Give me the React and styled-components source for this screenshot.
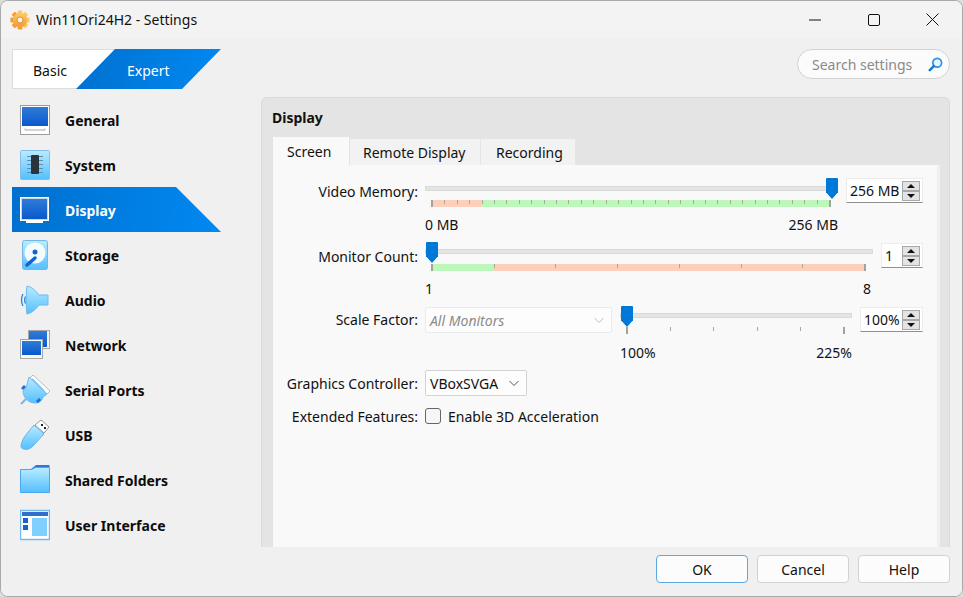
import React from 'react'
import styled, { createGlobalStyle } from 'styled-components'

const GlobalStyle = createGlobalStyle`
  html, body { margin: 0; padding: 0; background: #dcdcdc; }
  * { box-sizing: border-box; }
  body { font-family: "Noto Sans", "Open Sans", sans-serif; font-size: 14px; color: #111; }
`

const Window = styled.div`
  width: 963px;
  height: 597px;
  display: flex;
  flex-direction: column;
  overflow: hidden;
  background: #f0f0f0;
  border: 1px solid #a9a9a9;
  border-radius: 8px;
`

const TitleBar = styled.div`
  height: 37px;
  flex: none;
  display: flex;
  align-items: center;
  padding-left: 9px;
  background: #f3f3f3;
`

const TitleText = styled.span`
  margin-left: 6px;
  font-size: 14px;
  flex: 1;
`

const WinButton = styled.div`
  width: 59px;
  height: 37px;
  display: flex;
  align-items: center;
  justify-content: center;
`

const Main = styled.div`
  flex: 1;
  min-height: 0;
  display: flex;
  gap: 40px;
  padding: 11px 12px 0 11px;
`

const Sidebar = styled.div`
  width: 209px;
  flex: none;
`

const ModeSwitch = styled.div`
  display: flex;
  height: 40px;
  margin-bottom: 8px;
`

const ModeBasic = styled.div`
  width: 103px;
  background: #fff;
  border-left: 1px solid #dcdcdc;
  border-top: 1px solid #dcdcdc;
  border-bottom: 1px solid #dcdcdc;
  padding-left: 20px;
  line-height: 42px;
`

const ModeExpert = styled.div`
  width: 145px;
  margin-left: -39px;
  margin-right: -39px;
  padding-left: 51px;
  line-height: 44px;
  color: #fff;
  background: linear-gradient(100deg, #0070cf, #0089f2);
  clip-path: polygon(39px 0, 100% 0, 106px 100%, 0 100%);
`

const NavRow = styled.div`
  height: 45px;
  display: flex;
  align-items: center;
  padding: 1px 0 0 8px;
  gap: 15px;
  font-weight: 700;
  font-size: 14px;
  color: ${p => (p.$active ? '#fff' : '#0c0c0c')};
  background: ${p => (p.$active ? 'linear-gradient(100deg, #0070cf, #0089f2)' : 'none')};
  clip-path: ${p => (p.$active ? 'polygon(0 0, 164px 0, 100% 100%, 0 100%)' : 'none')};
`

const NavIcon = styled.svg`
  width: 30px;
  height: 32px;
  flex: none;
`

const Content = styled.div`
  flex: 1;
  min-width: 0;
  display: flex;
  flex-direction: column;
`

const SearchRow = styled.div`
  display: flex;
  justify-content: flex-end;
  margin-bottom: 18px;
`

const SearchBox = styled.div`
  width: 153px;
  height: 30px;
  display: flex;
  align-items: center;
  justify-content: space-between;
  padding: 0 6px 0 14px;
  background: #fbfbfb;
  border: 1px solid #d2d2d2;
  border-radius: 15px;
  color: #8a8a8a;
`

const Panel = styled.div`
  flex: 1;
  min-height: 0;
  display: flex;
  flex-direction: column;
  background: #e4e4e4;
  border: 1px solid #dadada;
  border-bottom: none;
  border-radius: 6px 6px 0 0;
  padding: 10px 9px 0 11px;
`

const PanelTitle = styled.div`
  font-weight: 700;
  font-size: 14px;
  line-height: 20px;
  margin: 0 0 9px -1px;
`

const TabBar = styled.div`
  display: flex;
  align-items: flex-end;
  gap: 1px;
  height: 28px;
  flex: none;
`

const Tab = styled.div`
  height: ${p => (p.$active ? '28px' : '26px')};
  width: ${p => p.$width}px;
  padding-left: ${p => p.$pad}px;
  line-height: ${p => (p.$active ? '29px' : '27px')};
  background: ${p => (p.$active ? '#f9f9f9' : '#f2f2f2')};
`

const TabPane = styled.div`
  flex: 1;
  min-height: 0;
  padding-top: 13px;
  background: #f9f9f9;
  border-right: 3px solid #f0f0f0;
`

const FormRow = styled.div`
  display: flex;
  height: ${p => p.$height}px;
`

const RowLabel = styled.div`
  width: 145px;
  flex: none;
  text-align: right;
  line-height: 20px;
  padding-top: ${p => p.$top}px;
`

const RowBody = styled.div`
  flex: 1;
  min-width: 0;
  display: flex;
  align-items: flex-start;
  gap: 8px;
  padding: 0 14px 0 7px;
`

const SliderCol = styled.div`
  position: relative;
  flex: 1;
  min-width: 0;
  padding-top: ${p => p.$top}px;
`

const Track = styled.div`
  height: 5px;
  background: #e3e5e4;
  border: 1px solid #d8dbd9;
`

const Thumb = styled.div`
  position: absolute;
  top: 0;
  width: 12px;
  height: 21px;
  background: #0078d7;
  border-radius: 1px 1px 0 0;
  clip-path: polygon(0 0, 100% 0, 100% 68%, 50% 100%, 0 68%);
`

const Strip = styled.div`
  height: 7px;
  margin: ${p => p.$gap}px 7px 0 6px;
  display: flex;
  justify-content: space-between;
  align-items: flex-start;
`

const Tick = styled.div`
  width: ${p => (p.$end ? 2 : 1)}px;
  height: ${p => (p.$end ? 7 : p.$tall)}px;
  background: ${p => (p.$end ? '#a5a297' : '#aaa79c')};
`

const ScaleLabels = styled.div`
  display: flex;
  justify-content: space-between;
  line-height: 20px;
  margin-top: ${p => p.$gap}px;
`

const Spin = styled.div`
  width: ${p => p.$width}px;
  height: 25px;
  flex: none;
  display: flex;
  align-items: center;
  justify-content: space-between;
  margin-top: ${p => p.$top}px;
  padding: 0 2px 0 3px;
  background: #fff;
  border: 1px solid #ececec;
  border-bottom: 1px solid #8f8f8f;
`

const SpinButtons = styled.div`
  width: 18px;
  display: flex;
  flex-direction: column;
  gap: 0;
`

const SpinButton = styled.div`
  height: 10px;
  display: flex;
  align-items: center;
  justify-content: center;
  background: #e3e3e3;
  border: 1px solid #a8a8a8;
  &::after {
    content: '';
    border-left: 4px solid transparent;
    border-right: 4px solid transparent;
    ${p => (p.$down ? 'border-top: 4px solid #111;' : 'border-bottom: 4px solid #111;')}
  }
`

const Select = styled.div`
  width: ${p => p.$width}px;
  height: 26px;
  flex: none;
  display: flex;
  align-items: center;
  justify-content: space-between;
  padding: 0 6px 0 4px;
  background: #fdfdfd;
  border: 1px solid ${p => (p.$disabled ? '#ebebeb' : '#d4d4d4')};
  border-radius: 2px;
  color: ${p => (p.$disabled ? '#8b8b8b' : '#111')};
  font-style: ${p => (p.$disabled ? 'italic' : 'normal')};
`

const Check = styled.div`
  width: 16px;
  height: 16px;
  flex: none;
  margin-top: 4px;
  background: #f6f6f6;
  border: 1px solid #666;
  border-radius: 3px;
`

const CheckText = styled.span`
  margin-left: -1px;
  line-height: 25px;
`

const Footer = styled.div`
  height: 49px;
  flex: none;
  display: flex;
  justify-content: flex-end;
  gap: 9px;
  padding: 8px 12px 0 0;
  background: #f0f0f0;
`

const Button = styled.div`
  width: 92px;
  height: 28px;
  line-height: 27px;
  text-align: center;
  background: #fcfcfc;
  border: 1px solid ${p => (p.$primary ? '#5ea8e2' : '#d2d2d2')};
  border-radius: 4px;
`

const Grads = () => (
  <defs>
    <linearGradient id="scr" x1="0" y1="0" x2="0" y2="1">
      <stop offset="0" stopColor="#2f7cd9" />
      <stop offset="1" stopColor="#0a58cb" />
    </linearGradient>
    <linearGradient id="sky" x1="0" y1="0" x2="0" y2="1">
      <stop offset="0" stopColor="#b9ecff" />
      <stop offset="1" stopColor="#54bfff" />
    </linearGradient>
  </defs>
)

const Icon = ({ children }) => (
  <NavIcon viewBox="0 0 30 32">
    <Grads />
    {children}
  </NavIcon>
)

const GeneralIcon = () => (
  <Icon>
    <rect x="0.5" y="1.5" width="29" height="29" fill="#fff" stroke="#9c9c9c" />
    <rect x="2" y="3" width="26" height="19" fill="url(#scr)" />
    <path d="M5 24.5v1.5h20v-1.5" fill="none" stroke="#a8a8a8" />
  </Icon>
)

const SystemIcon = () => (
  <Icon>
    <rect x="0.5" y="1.5" width="29" height="29" rx="1" fill="url(#sky)" stroke="#86bde4" />
    <path d="M7 7.5h16M7 11.5h16M7 15.5h16M7 19.5h16M7 23.5h16" stroke="#5a8fb8" />
    <rect x="11" y="6" width="8" height="19" rx="1" fill="#2b333b" />
  </Icon>
)

const DisplayIcon = () => (
  <Icon>
    <rect x="0.5" y="3.5" width="28" height="23" fill="#cfd6dc" stroke="#fff" />
    <rect x="2" y="5" width="25" height="20" fill="url(#scr)" />
    <path d="M6 27h17v2H6z" fill="#fff" />
  </Icon>
)

const StorageIcon = () => (
  <Icon>
    <rect x="2.5" y="1.5" width="25" height="29" rx="2" fill="url(#sky)" stroke="#74b7e6" />
    <circle cx="15" cy="14" r="10.5" fill="#f4fbff" />
    <circle cx="15" cy="13" r="2.5" fill="#0f65cf" />
    <path d="M7 26l8-7" stroke="#0f65cf" strokeWidth="3.5" strokeLinecap="round" />
  </Icon>
)

const AudioIcon = () => (
  <Icon>
    <path d="M7 2c5 1 9 5 12 9h9v10h-9c-3 4-7 8-12 9-1-3-1-25 0-28z" fill="url(#sky)" stroke="#6fb9ec" />
    <path d="M3 10c-2 4-2 8 0 12M5.5 12.5c-1 2-1 5 0 7" fill="none" stroke="#2a84dc" strokeWidth="1.3" />
  </Icon>
)

const NetworkIcon = () => (
  <Icon>
    <rect x="8.5" y="1.5" width="21" height="18" fill="#f3f3f3" stroke="#a6a6a6" />
    <rect x="9" y="2" width="18" height="16" fill="url(#scr)" />
    <rect x="0.5" y="10.5" width="22" height="19" fill="#f7f7f7" stroke="#a6a6a6" />
    <rect x="2" y="12" width="19" height="14" fill="url(#scr)" />
  </Icon>
)

const SerialIcon = () => (
  <Icon>
    <path d="M13 1l17 16-3 3L10 4z" fill="#fff" stroke="#bbb" />
    <path d="M9 3l18 17-4 3c-1 4-4 6-8 6-7 0-12-6-12-12l3-3z" fill="url(#sky)" stroke="#6fb9ec" />
    <path d="M1 14l3-3 2 2-3 3zM16 27l3-3 2 2-3 3z" fill="#1c6fd0" />
    <path d="M1 30l5-5" stroke="#6fb9ec" strokeWidth="2" />
    <path d="M12 5l12 12" stroke="#7fc6f5" strokeWidth="2" />
  </Icon>
)

const UsbIcon = () => (
  <Icon>
    <path d="M21 1l8 7-5 6-9-8z" fill="#fff" stroke="#9a9a9a" />
    <rect x="21" y="5" width="2" height="2" fill="#222" />
    <rect x="24" y="8" width="2" height="2" fill="#222" />
    <path d="M14 6l10 9-11 12c-3 3-6 4-9 3-2 0-3-1-3-3 0-3 2-7 4-10z" fill="url(#sky)" stroke="#69b6ec" />
  </Icon>
)

const FolderIcon = () => (
  <Icon>
    <path d="M11 5l5-4h13.500v6H11z" fill="#2d77d6" />
    <path d="M0.500 5.500h11l4-2h14v25H0.500z" fill="url(#sky)" stroke="#4ba6ee" />
  </Icon>
)

const InterfaceIcon = () => (
  <Icon>
    <rect x="0.5" y="1.5" width="29" height="29" fill="#fff" stroke="#74b8f0" strokeWidth="1.5" />
    <rect x="2" y="3" width="26" height="4" fill="#2d6fc9" />
    <rect x="3" y="9" width="5" height="5" fill="#1466cc" />
    <rect x="3" y="16" width="5" height="5" fill="#1466cc" />
    <rect x="12" y="9" width="15" height="18" fill="#7fd0ff" />
  </Icon>
)

const GearIcon = () => (
  <svg width="20" height="20" viewBox="0 0 20 20">
    <defs>
      <linearGradient id="gear" x1="0" y1="0" x2="0" y2="1">
        <stop offset="0" stopColor="#ffcb66" />
        <stop offset="1" stopColor="#f29a2e" />
      </linearGradient>
    </defs>
    {[0, 45, 90, 135].map(a => (
      <rect key={a} x="7.6" y="0.4" width="4.8" height="19.2" rx="1" fill="url(#gear)" transform={`rotate(${a} 10 10)`} />
    ))}
    <circle cx="10" cy="10" r="7" fill="url(#gear)" />
    <circle cx="10" cy="10" r="3" fill="#fdf3df" stroke="#c9761a" strokeWidth="0.7" />
  </svg>
)

const SearchIcon = () => (
  <svg width="15" height="15" viewBox="0 0 15 15">
    <circle cx="9.2" cy="5.8" r="4.4" fill="#e8f5ff" stroke="#2f8fe4" strokeWidth="1.7" />
    <path d="M5.8 9.2L1.8 13.2" stroke="#1e78d4" strokeWidth="2.6" strokeLinecap="round" />
  </svg>
)

const Chevron = ({ color }) => (
  <svg width="12" height="7" viewBox="0 0 12 7">
    <path d="M1.5 1l4.5 4.5L10.5 1" fill="none" stroke={color} />
  </svg>
)

const navItems = [
  ['General', GeneralIcon],
  ['System', SystemIcon],
  ['Display', DisplayIcon],
  ['Storage', StorageIcon],
  ['Audio', AudioIcon],
  ['Network', NetworkIcon],
  ['Serial Ports', SerialIcon],
  ['USB', UsbIcon],
  ['Shared Folders', FolderIcon],
  ['User Interface', InterfaceIcon],
]

function Ticks({ count, tall }) {
  return Array.from({ length: count }, (_, i) => (
    <Tick key={i} $end={i === 0 || i === count - 1} $tall={tall} />
  ))
}

function SpinBox({ width, top, value }) {
  return (
    <Spin $width={width} $top={top}>
      <span>{value}</span>
      <SpinButtons>
        <SpinButton />
        <SpinButton $down />
      </SpinButtons>
    </Spin>
  )
}

export default function App() {
  return (
    <Window>
      <GlobalStyle />
      <TitleBar>
        <GearIcon />
        <TitleText>Win11Ori24H2 - Settings</TitleText>
        <WinButton>
          <svg width="12" height="2"><path d="M0 1h12" stroke="#111" /></svg>
        </WinButton>
        <WinButton>
          <svg width="12" height="12"><rect x="0.5" y="0.5" width="11" height="11" rx="1.5" fill="none" stroke="#111" /></svg>
        </WinButton>
        <WinButton>
          <svg width="13" height="13"><path d="M0.5 0.5l12 12M12.5 0.5l-12 12" stroke="#111" /></svg>
        </WinButton>
      </TitleBar>
      <Main>
        <Sidebar>
          <ModeSwitch>
            <ModeBasic>Basic</ModeBasic>
            <ModeExpert>Expert</ModeExpert>
          </ModeSwitch>
          {navItems.map(([label, Ic]) => (
            <NavRow key={label} $active={label === 'Display'}>
              <Ic />
              {label}
            </NavRow>
          ))}
        </Sidebar>
        <Content>
          <SearchRow>
            <SearchBox>
              Search settings
              <SearchIcon />
            </SearchBox>
          </SearchRow>
          <Panel>
            <PanelTitle>Display</PanelTitle>
            <TabBar>
              <Tab $active $width={76} $pad={14}>Screen</Tab>
              <Tab $width={130} $pad={13}>Remote Display</Tab>
              <Tab $width={94} $pad={15}>Recording</Tab>
            </TabBar>
            <TabPane>
              <FormRow $height={64}>
                <RowLabel $top={4}>Video Memory:</RowLabel>
                <RowBody>
                  <SliderCol $top={8}>
                    <Track />
                    <Thumb style={{ left: 401 }} />
                    <Strip $gap={9} style={{ background: 'linear-gradient(to right, #fccfbb 12.5%, #bdf7bb 12.5%)' }}>
                      <Ticks count={33} tall={4} />
                    </Strip>
                    <ScaleLabels $gap={8}>
                      <span>0 MB</span>
                      <span>256 MB</span>
                    </ScaleLabels>
                  </SliderCol>
                  <SpinBox width={77} top={0} value="256 MB" />
                </RowBody>
              </FormRow>
              <FormRow $height={64}>
                <RowLabel $top={5}>Monitor Count:</RowLabel>
                <RowBody>
                  <SliderCol $top={7}>
                    <Track />
                    <Thumb style={{ left: 1 }} />
                    <Strip $gap={10} style={{ background: 'linear-gradient(to right, #bdf7bb 14.3%, #fccfbb 14.3%)' }}>
                      <Ticks count={8} tall={4} />
                    </Strip>
                    <ScaleLabels $gap={8}>
                      <span>1</span>
                      <span style={{ marginRight: 2 }}>8</span>
                    </ScaleLabels>
                  </SliderCol>
                  <SpinBox width={42} top={1} value="1" />
                </RowBody>
              </FormRow>
              <FormRow $height={64}>
                <RowLabel $top={4}>Scale Factor:</RowLabel>
                <RowBody>
                  <Select $width={187} $disabled style={{ marginTop: 1 }}>
                    All Monitors
                    <Chevron color="#bdbdbd" />
                  </Select>
                  <SliderCol $top={7}>
                    <Track />
                    <Thumb style={{ left: 1 }} />
                    <Strip $gap={9}>
                      <Ticks count={6} tall={4} />
                    </Strip>
                    <ScaleLabels $gap={9}>
                      <span>100%</span>
                      <span>225%</span>
                    </ScaleLabels>
                  </SliderCol>
                  <SpinBox width={63} top={1} value="100%" />
                </RowBody>
              </FormRow>
              <FormRow $height={34}>
                <RowLabel $top={4}>Graphics Controller:</RowLabel>
                <RowBody>
                  <Select $width={102}>
                    VBoxSVGA
                    <Chevron color="#555" />
                  </Select>
                </RowBody>
              </FormRow>
              <FormRow $height={34}>
                <RowLabel $top={3}>Extended Features:</RowLabel>
                <RowBody>
                  <Check />
                  <CheckText>Enable 3D Acceleration</CheckText>
                </RowBody>
              </FormRow>
            </TabPane>
          </Panel>
        </Content>
      </Main>
      <Footer>
        <Button $primary>OK</Button>
        <Button>Cancel</Button>
        <Button>Help</Button>
      </Footer>
    </Window>
  )
}
